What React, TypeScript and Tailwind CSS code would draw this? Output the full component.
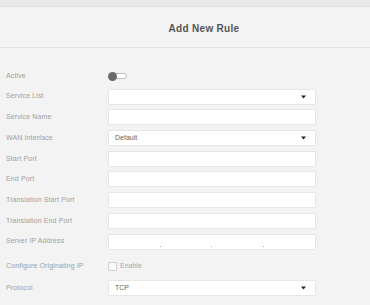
import React from 'react';

const font = { fontFamily: '"Liberation Sans", Arial, sans-serif' };

function Caret() {
  return (
    <svg width="5" height="4" viewBox="0 0 5 4" className="shrink-0">
      <path d="M0 0.5h5L2.5 3.5z" fill="#222" />
    </svg>
  );
}

function Field({ value, select }: { value?: string; select?: boolean }) {
  return (
    <div className="w-[208px] h-[16px] bg-white border border-[#e6e6e6] rounded-[1px] flex items-center justify-between pl-[6px] pr-[9px] text-[7px] text-[#666]">
      <span>{value}</span>
      {select && <Caret />}
    </div>
  );
}

function Row({ label, children, className = '' }: { label: string; children: React.ReactNode; className?: string }) {
  return (
    <div className={`flex items-center ${className}`}>
      <div className="w-[102px] shrink-0 text-[7px] tracking-[0.12px] text-[#a0a0a0]">{label}</div>
      {children}
    </div>
  );
}

export default function App() {
  return (
    <div className="w-[370px] h-[305px] overflow-hidden bg-[#f3f3f3]" style={font}>
      <div className="h-[7px] bg-[#e8e8e8] border-b border-[#dedede]" />
      <div className="h-[41px] flex items-end justify-center pb-[11px] pl-[38px] border-b border-[#e3e3e3]">
        <h1 className="text-[10px] font-bold text-[#555] tracking-[0.3px]">Add New Rule</h1>
      </div>

      <div className="pl-[6px] pt-[20px] flex flex-col gap-[4.7px]">
        <Row label="Active" className="h-[16px]">
          <div className="relative w-[19px] h-[9px] flex items-center">
            <div className="absolute left-[3px] right-0 h-[6px] bg-white border border-[#bdbdbd] rounded-full" />
            <div className="absolute left-0 w-[9px] h-[9px] rounded-full bg-[#6a6a6a]" />
          </div>
        </Row>
        <Row label="Service List"><Field select /></Row>
        <Row label="Service Name"><Field /></Row>
        <Row label="WAN Interface"><Field value="Default" select /></Row>
        <Row label="Start Port"><Field /></Row>
        <Row label="End Port"><Field /></Row>
        <Row label="Translation Start Port"><Field /></Row>
        <Row label="Translation End Port"><Field /></Row>
        <Row label="Server IP Address">
          <div className="w-[208px] h-[16px] bg-white border border-[#e6e6e6] rounded-[1px] grid grid-cols-4">
            {[0, 1, 2, 3].map((i) => (
              <div key={i} className="relative">
                {i > 0 && <span className="absolute left-[-1px] bottom-[2px] w-[1px] h-[1px] bg-[#b0b0b0]" />}
              </div>
            ))}
          </div>
        </Row>
        <Row label="Configure Originating IP" className="h-[21.6px] pt-[3px]">
          <label className="flex items-center gap-[3px] text-[7px] text-[#aaa]">
            <span className="w-[9px] h-[9px] border border-[#cfcfcf] bg-[#fafafa] rounded-[1px]" />
            Enable
          </label>
        </Row>
        <Row label="Protocol"><Field value="TCP" select /></Row>
      </div>
    </div>
  );
}
